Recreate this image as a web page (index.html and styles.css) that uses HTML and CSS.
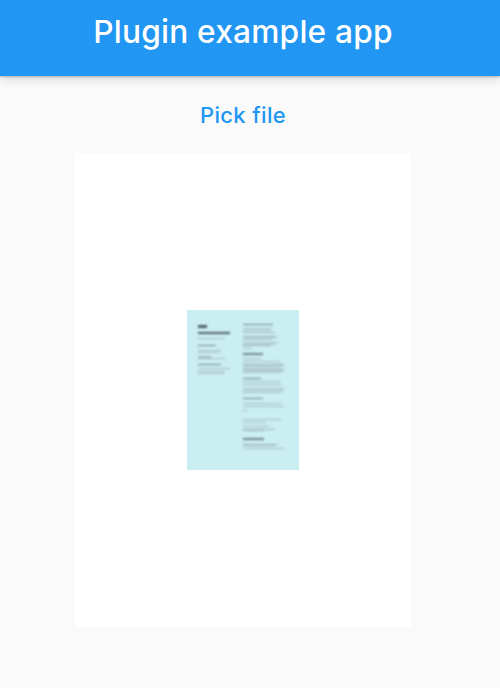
FILE: index.html
```html
<!DOCTYPE html>
<html lang="en">
<head>
<meta charset="utf-8">
<title>Plugin example app</title>
<link rel="stylesheet" href="styles.css">
</head>
<body>
<header class="appbar"><h1 class="title">Plugin example app</h1></header>
<main class="content">
  <button class="pick" type="button">Pick file</button>
  <section class="viewer">
    <div class="doc" role="img" aria-label="Thumbnail of a two-column résumé">
      <div class="col left">
        <i class="l h1 w9"></i><i class="l h1 w32 g4"></i><i class="l w27 g4"></i>
        <i class="l s w18 g6"></i><i class="l w23 g4"></i><i class="l w21 g1"></i>
        <i class="l w13 g3"></i><i class="l w13 g0"></i><i class="l w27 g0"></i>
        <i class="l s w23 g5"></i><i class="l w32 g3"></i><i class="l w27 g2"></i><i class="l w26 g1"></i>
      </div>
      <div class="col right">
        <i class="l s w30"></i>
        <i class="l w29 g3"></i><i class="l w28 g1"></i><i class="l w32 g1"></i>
        <i class="l w35 g3"></i><i class="l w32 g1"></i><i class="l w29 g1"></i>
        <i class="l w35 g2"></i><i class="l w32 g1"></i><i class="l w28 g1"></i>
        <i class="l w9 g2"></i>
        <i class="l s w20 g4"></i>
        <i class="l w18 g3"></i><i class="l w37 g2"></i>
        <i class="l w41 g2"></i><i class="l w41 g1"></i><i class="l w38 g1"></i>
        <i class="l w41 g1"></i><i class="l w41 g1"></i><i class="l w38 g1"></i>
        <i class="l s w18 g5"></i>
        <i class="l w37 g2"></i><i class="l w38 g2"></i><i class="l w41 g3"></i><i class="l w41 g1"></i><i class="l w38 g1"></i>
        <i class="l s w20 g5"></i>
        <i class="l w38 g4"></i><i class="l w41 g2"></i><i class="l w4 g3"></i>
        <i class="l w38 g8"></i><i class="l w23 g2"></i><i class="l w26 g3"></i><i class="l w32 g2"></i><i class="l w21 g1"></i>
        <i class="l s w21 g7"></i>
        <i class="l w35 g4"></i><i class="l w32 g0"></i><i class="l w41 g2"></i>
      </div>
    </div>
  </section>
</main>
</body>
</html>
```

FILE: styles.css
```css
* { box-sizing: border-box; }
html, body { height: 100%; }
body {
  margin: 0;
  background: #fafafa;
  font-family: Inter, Roboto, "Liberation Sans", sans-serif;
  overflow: hidden;
}
.appbar {
  height: 76px;
  background: #2196f3;
  box-shadow: 0 1px 2px rgba(0,0,0,.22), 0 4px 10px rgba(0,0,0,.12);
  display: flex;
  align-items: center;
  justify-content: center;
  padding-right: 14px;
  padding-bottom: 13px;
}
.title {
  margin: 0;
  color: #fff;
  font-size: 31.7px;
  font-weight: 500;
  letter-spacing: .2px;
}
.content {
  display: flex;
  flex-direction: column;
  align-items: center;
  padding-right: 14px;
}
.pick {
  border: 0;
  padding: 0;
  margin-top: 25px;
  height: 27px;
  background: none;
  color: #2196f3;
  font: 450 22px Inter, Roboto, "Liberation Sans", sans-serif;
  letter-spacing: .35px;
}
.viewer {
  margin-top: 25px;
  width: 336px;
  height: 474px;
  background: #fff;
  display: flex;
  align-items: center;
  justify-content: center;
}
.doc {
  width: 112px;
  height: 160px;
  background: #cbeef2;
  display: flex;
  padding: 14px 0 0 11px;
}
.col { display: flex; flex-direction: column; filter: blur(.9px); }
.left { width: 45px; padding-top: 1px; }
.l { display: block; height: 1px; background: #a5bcc0; flex: none; }
.s { background: #6e8488; height: 1.2px; }
.h1 { height: 2.5px; background: #4d6063; }
.g0 { margin-top: 0; }
.g1 { margin-top: .7px; }
.g2 { margin-top: 2px; }
.g3 { margin-top: 3px; }
.g4 { margin-top: 4px; }
.g5 { margin-top: 5px; }
.g6 { margin-top: 6px; }
.g7 { margin-top: 7px; }
.g8 { margin-top: 8px; }
.w4 { width: 4px; } .w9 { width: 9px; } .w13 { width: 13px; } .w18 { width: 18px; }
.w20 { width: 20px; } .w21 { width: 21px; } .w23 { width: 23px; } .w26 { width: 26px; }
.w27 { width: 27px; } .w28 { width: 28px; } .w29 { width: 29px; } .w30 { width: 30px; }
.w32 { width: 32px; } .w35 { width: 35px; } .w37 { width: 37px; } .w38 { width: 38px; }
.w41 { width: 41px; }
```
